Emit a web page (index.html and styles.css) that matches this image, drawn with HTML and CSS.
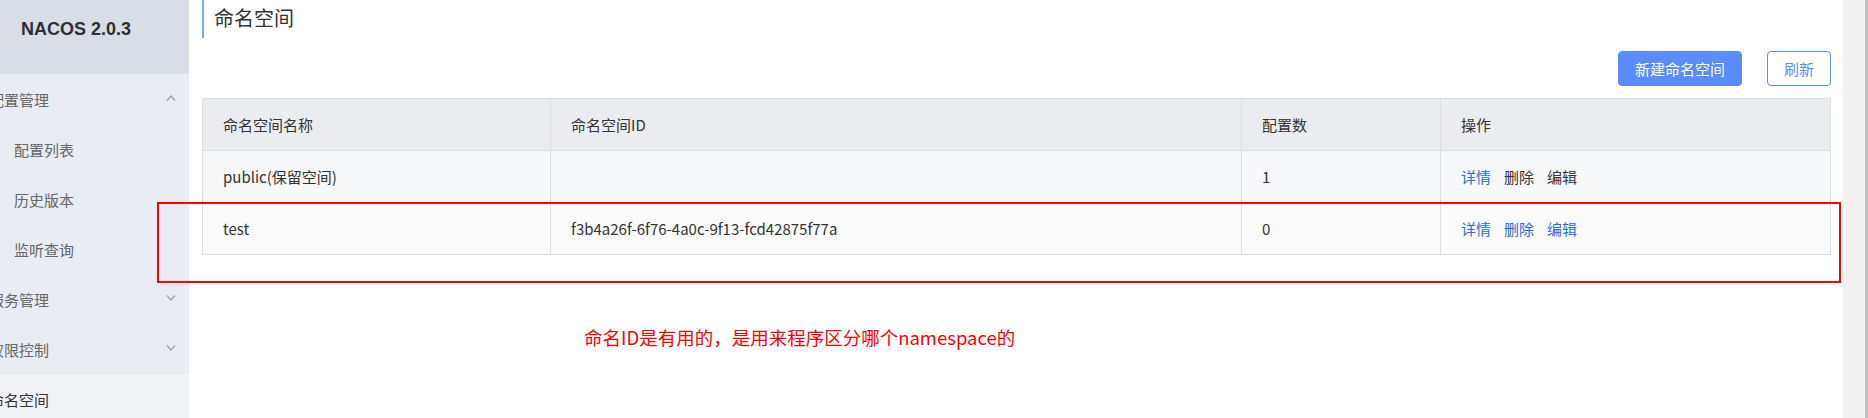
FILE: index.html
```html
<!DOCTYPE html>
<html lang="zh-CN">
<head>
<meta charset="utf-8">
<title>命名空间</title>
<link rel="stylesheet" href="styles.css">
</head>
<body>
<div class="app">
  <aside class="sidebar">
    <div class="logo">NACOS 2.0.3</div>
    <ul class="menu">
      <li class="item parent"><span class="label">配置管理</span><svg class="chev" width="10" height="6" viewBox="0 0 10 6"><polyline points="1,5.5 5,1 9,5.5" fill="none" stroke="#9aa0aa" stroke-width="1.2"/></svg></li>
      <li class="item child"><span class="label">配置列表</span></li>
      <li class="item child"><span class="label">历史版本</span></li>
      <li class="item child"><span class="label">监听查询</span></li>
      <li class="item parent"><span class="label">服务管理</span><svg class="chev" width="10" height="6" viewBox="0 0 10 6"><polyline points="1,0.5 5,5 9,0.5" fill="none" stroke="#9aa0aa" stroke-width="1.2"/></svg></li>
      <li class="item parent"><span class="label">权限控制</span><svg class="chev" width="10" height="6" viewBox="0 0 10 6"><polyline points="1,0.5 5,5 9,0.5" fill="none" stroke="#9aa0aa" stroke-width="1.2"/></svg></li>
      <li class="item parent active"><span class="label">命名空间</span></li>
    </ul>
  </aside>
  <main class="main">
    <h1 class="title">命名空间</h1>
    <div class="toolbar">
      <button class="btn primary">新建命名空间</button>
      <button class="btn outline">刷新</button>
    </div>
    <table class="grid">
      <colgroup>
        <col class="c1"><col class="c2"><col class="c3"><col class="c4">
      </colgroup>
      <thead>
        <tr><th>命名空间名称</th><th>命名空间ID</th><th>配置数</th><th>操作</th></tr>
      </thead>
      <tbody>
        <tr class="r1">
          <td>public(保留空间)</td><td></td><td>1</td>
          <td class="ops"><a class="link">详情</a><a class="link dark">删除</a><a class="link dark">编辑</a></td>
        </tr>
        <tr class="r2">
          <td>test</td><td>f3b4a26f-6f76-4a0c-9f13-fcd42875f77a</td><td>0</td>
          <td class="ops"><a class="link">详情</a><a class="link">删除</a><a class="link">编辑</a></td>
        </tr>
      </tbody>
    </table>
  </main>
  <div class="scrollbar"><div class="thumb"></div></div>
</div>
<div class="mark-box"></div>
<div class="mark-note">命名ID是有用的，是用来程序区分哪个namespace的</div>
</body>
</html>
```

FILE: styles.css
```css
* { box-sizing: border-box; }
html, body { margin: 0; padding: 0; }
body {
  width: 1868px;
  height: 418px;
  overflow: hidden;
  font-family: "Noto Sans CJK SC", "Noto Sans", sans-serif;
  color: #333;
  background: #fff;
}
.app {
  display: flex;
  height: 418px;
}
.sidebar {
  width: 189px;
  flex: none;
  background: #e9ecf2;
  overflow: hidden;
}
.logo {
  height: 74px;
  background: #d9dde5;
  padding-left: 21px;
  padding-top: 16px;
  font-family: "Liberation Sans", Arial, sans-serif;
  font-weight: bold;
  font-size: 18px;
  line-height: 26px;
  color: #2c2f36;
}
.menu {
  list-style: none;
  margin: 0;
  padding: 0;
}
.item {
  height: 50px;
  display: flex;
  align-items: center;
  justify-content: space-between;
  padding-right: 13px;
  font-size: 15px;
  color: #666;
}
.item .label { white-space: nowrap; }
.parent .label { margin-left: -11px; }
.child .label { margin-left: 14px; }
.item.active {
  background: #f1f2f6;
  color: #333;
}
.chev { margin-top: -2px; }
.main {
  flex: 1;
  padding: 0 12px 0 13px;
}
.title {
  margin: 0;
  height: 38px;
  border-left: 2px solid #7eaade;
  padding-left: 10px;
  font-size: 20px;
  font-weight: normal;
  line-height: 36px;
  color: #333;
}
.toolbar {
  display: flex;
  justify-content: flex-end;
  gap: 25px;
  margin-top: 13px;
  margin-bottom: 12px;
}
.btn {
  height: 35px;
  padding: 0 16px;
  border-radius: 4px;
  font-family: "Noto Sans CJK SC", "Noto Sans", sans-serif;
  font-size: 15px;
  line-height: 33px;
  cursor: pointer;
}
.btn.primary {
  background: #5a8bff;
  border: 1px solid #5a8bff;
  color: #fff;
}
.btn.outline {
  background: #fff;
  border: 1px solid #5a8bff;
  color: #5a8bff;
}
.grid {
  width: 100%;
  border-collapse: collapse;
  table-layout: fixed;
  font-size: 15px;
}
.c1 { width: 348px; }
.c2 { width: 691px; }
.c3 { width: 199px; }
.c4 { width: 390px; }
.grid th, .grid td {
  height: 52px;
  border: 1px solid #dcdee3;
  padding: 0 0 0 20px;
  text-align: left;
  font-weight: normal;
  color: #333;
  white-space: nowrap;
}
.grid thead th { background: #ebecf0; }
.r1 td { background: #f7f8fa; }
.r2 td { background: #fbfbfc; }
.ops .link {
  color: #2a6fd6;
  margin-right: 13px;
  cursor: pointer;
}
.ops .link.dark { color: #333; }
.scrollbar {
  width: 26px;
  flex: none;
  background: #f1f1f1;
  display: flex;
  justify-content: flex-end;
}
.thumb {
  width: 4px;
  background: #c1c1c1;
}
.mark-box {
  position: absolute;
  left: 157px;
  top: 202px;
  width: 1684px;
  height: 81px;
  border: 2px solid #ff0000;
}
.mark-note {
  position: absolute;
  left: 584px;
  top: 324px;
  font-size: 18.5px;
  line-height: 26px;
  color: #ff0000;
  white-space: nowrap;
}
```
